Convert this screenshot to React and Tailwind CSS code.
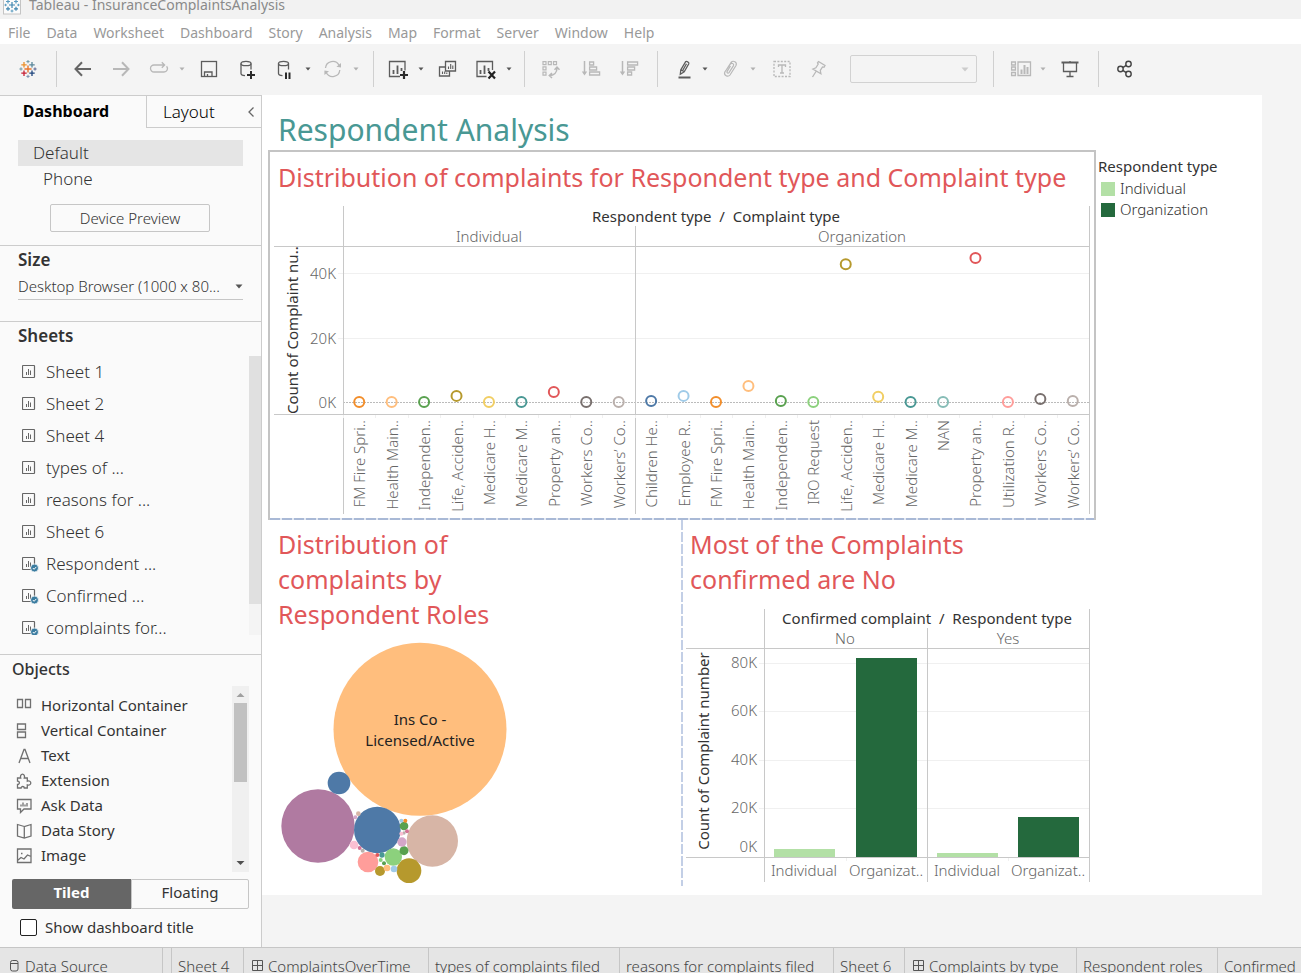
import React from "react";

/* ---------- toolbar glyphs ---------- */

const DARK = "#5c5c5c";
const DIM = "#b8b8b8";

function Glyph({ children, color = DARK, w = 24, sw = 1.5 }) {
  return (
    <svg width={w} height="24" viewBox={`0 0 ${w} 24`} fill="none" stroke={color} strokeWidth={sw} aria-hidden="true">
      {children}
    </svg>
  );
}

function plus(x, y, r, color, w = 1.3) {
  return <path key={`${x}-${y}`} d={`M${x - r} ${y}h${2 * r}M${x} ${y - r}v${2 * r}`} stroke={color} strokeWidth={w} />;
}

function TableauMark() {
  return (
    <Glyph>
      {plus(12, 12, 3.6, "#e8762d", 1.4)}
      {plus(8, 7.8, 2.7, "#eb912c")}
      {plus(16, 7.8, 2.7, "#59879b")}
      {plus(8, 16.2, 2.7, "#c72035")}
      {plus(16, 16.2, 2.7, "#1f457e")}
      {plus(12, 4.6, 1.6, "#7099a6", 1)}
      {plus(12, 19.4, 1.6, "#7b8fae", 1)}
      {plus(5, 12, 1.6, "#7099a6", 1)}
      {plus(19, 12, 1.6, "#5b6591", 1)}
    </Glyph>
  );
}

function AppMark() {
  return (
    <svg width="18" height="18" viewBox="0 0 18 18" aria-hidden="true">
      <rect x="0.5" y="0.5" width="17" height="16.5" fill="#fbfbfb" stroke="#c4c4c4" />
      <g>
        {plus(9, 8, 3, "#3f86b0", 1.2)}
        {plus(5, 4.5, 2, "#5b9cc0", 1.2)}
        {plus(13, 4.5, 2, "#5b9cc0", 1.2)}
        {plus(5, 11.8, 2, "#3f86b0", 1.2)}
        {plus(13, 11.8, 2, "#3f86b0", 1.2)}
        {plus(9, 14, 1.4, "#5b9cc0", 1)}
        {plus(2.6, 8, 1.2, "#5b9cc0", 1)}
        {plus(15.4, 8, 1.2, "#5b9cc0", 1)}
      </g>
    </svg>
  );
}

const icons = {
  back: (
    <Glyph color="#666666" sw={2}>
      <path d="M4.5 12H20M11 5.2L4.5 12l6.5 6.8" />
    </Glyph>
  ),
  forward: (
    <Glyph color={DIM} sw={2}>
      <path d="M4 12h15M13 5.2L19.5 12 13 18.8" />
    </Glyph>
  ),
  redo: (
    <Glyph color={DIM} sw={1.3}>
      <path d="M11 8H7a3.5 3.5 0 0 0 0 7h10a3.5 3.5 0 0 0 2.6-5.8M9 8h8.5M14.8 5.2L17.6 8l-2.8 2.8" />
    </Glyph>
  ),
  save: (
    <Glyph sw={1.3}>
      <rect x="4.5" y="4.5" width="15" height="15" />
      <path d="M7.5 19.5v-4.5h7.5v4.5M10.5 19v-2" />
    </Glyph>
  ),
  addData: (
    <Glyph sw={1.3}>
      <ellipse cx="11" cy="6.5" rx="5" ry="2.2" />
      <path d="M6 6.5v10c0 1.2 1.8 2 4 2.2M16 6.5v6" />
      <path d="M16 14v8M12 18h8" stroke="#2b2b2b" strokeWidth="2" />
    </Glyph>
  ),
  pauseData: (
    <Glyph sw={1.3}>
      <ellipse cx="10.5" cy="6.5" rx="5" ry="2.2" />
      <path d="M5.5 6.5v10c0 1.2 1.8 2 4 2.2M15.5 6.5v6" />
      <path d="M13 15.5v6.5M16.5 15.5v6.5" stroke="#2b2b2b" strokeWidth="2" />
    </Glyph>
  ),
  refresh: (
    <Glyph color={DIM} sw={1.3}>
      <path d="M4.5 11a7.2 7.2 0 0 1 13.5-2.8M18.8 13a7.2 7.2 0 0 1-13.5 2.8" />
      <path d="M20 6v4.6l-4.6-.8zM3.4 18v-4.6l4.6.8z" fill={DIM} stroke="none" />
    </Glyph>
  ),
  newSheet: (
    <Glyph sw={1.3}>
      <path d="M14 19.5H3.5v-15h15.5v9" />
      <path d="M7.5 13v4M11.5 8.5V17M15.5 11v3" strokeWidth="1.8" />
      <path d="M18 14v8M14 18h8" stroke="#2b2b2b" strokeWidth="2.2" />
    </Glyph>
  ),
  duplicate: (
    <Glyph sw={1.3}>
      <path d="M9.5 14V4.5h10v9.5zM9.5 10H3.5v9h10v-5" />
      <path d="M12.5 9.5v2.5M14.7 7v5M16.8 8.5V12M6.5 14.5v2.5M8.7 14.5V17M10.8 15.5V17" strokeWidth="1.1" />
    </Glyph>
  ),
  clear: (
    <Glyph sw={1.3}>
      <path d="M12.5 19.5H3V4.5h15.5v8.5" />
      <path d="M6.5 13v4M10.5 8.5V17M14.5 11v3" strokeWidth="1.8" />
      <path d="M14.5 14.5l6.5 7M21 14.5l-6.5 7" stroke="#222222" strokeWidth="2.2" />
    </Glyph>
  ),
  swap: (
    <Glyph color={DIM} sw={1.2}>
      <path d="M4 4.6h3v3H4zM9.3 4.6h3v3h-3zM14.5 4.6h3v3h-3zM4 9.9h3v3H4zM4 15.1h3v3H4z" />
      <path d="M10.5 18.5c4.5 0 7.5-3 7.5-7.5M15.5 12.8L18 10.2l2.5 2.6M13 16l-2.7 2.6L13 21" strokeWidth="1.5" />
    </Glyph>
  ),
  sortAsc: (
    <Glyph color={DIM} sw={1.3}>
      <path d="M5.5 4v13" strokeWidth="1.5" />
      <path d="M2.8 14.5h5.4L5.5 18.5z" fill={DIM} stroke="none" />
      <path d="M10.6 5h4v3h-4zM10.6 10h7v3h-7zM10.6 15h10v3h-10z" />
    </Glyph>
  ),
  sortDesc: (
    <Glyph color={DIM} sw={1.3}>
      <path d="M5.5 4v13" strokeWidth="1.5" />
      <path d="M2.8 14.5h5.4L5.5 18.5z" fill={DIM} stroke="none" />
      <path d="M10.6 5h10v3h-10zM10.6 10h7v3h-7zM10.6 15h4v3h-4z" />
    </Glyph>
  ),
  highlight: (
    <Glyph sw={1.3}>
      <path d="M8.8 12.8L13.5 4.8c1-1 3.8.4 3.3 1.9L12.2 14.8 8.3 17.3zM8.8 12.8l3.4 2M10.8 13.3l3.7-6.5" />
      <path d="M6.5 20.5h12" strokeWidth="2" />
    </Glyph>
  ),
  clip: (
    <Glyph color={DIM} sw={1.2}>
      <path d="M8.5 12.5l4.5-7c2.2-2.6 6.5-.5 5 3L12 18c-2 2.5-6.5.5-5.2-3L12.5 7c1.2-1.5 3.8-.3 3 1.6l-4.5 7c-.8 1-2.4.3-2-1l3.5-5.6" />
    </Glyph>
  ),
  label: (
    <Glyph color={DIM} sw={1.3}>
      <rect x="4" y="4.5" width="16" height="15" strokeDasharray="2 1.4" />
      <path d="M8.5 10V8h7v2M12 8v8M10 16h4" />
    </Glyph>
  ),
  pin: (
    <Glyph color={DIM} sw={1.3}>
      <path d="M12.5 4.5l6.5 4-1 1.8-1.5-.4-2.2 3.6.6 3.3-8-4.8 3-1.2 2.3-3.7-.7-1.2zM10 14.5L6.5 20" />
    </Glyph>
  ),
  cards: (
    <Glyph color={DIM} w={26} sw={1.3}>
      <path d="M3.6 5h3.8v3H3.6zM3.6 10h3.8v3H3.6zM3.6 15.5h3.8v3H3.6zM10 5h12.5v13.5H10z" />
      <path d="M13.5 12.5V17M16.5 8v9M19.5 10v7" strokeWidth="2" />
    </Glyph>
  ),
  present: (
    <Glyph sw={1.3}>
      <path d="M3.5 5.5h17" strokeWidth="2" />
      <path d="M5.5 6v8.5h13V6M12 4v1M12 14.5v5M8.5 19.5h7" />
    </Glyph>
  ),
  share: (
    <Glyph color="#444444" sw={1.4}>
      <circle cx="7.5" cy="12" r="2.7" />
      <circle cx="15.5" cy="7" r="2.7" />
      <circle cx="15.5" cy="17" r="2.7" />
      <path d="M9.8 10.6l3.4-2.2M9.8 13.4l3.4 2.2" />
    </Glyph>
  ),
};

function Tool({ name, label, className = "" }) {
  return (
    <button type="button" aria-label={label} className={`flex shrink-0 items-center justify-center ${className}`}>
      {icons[name]}
    </button>
  );
}

function Caret({ dim, label, className = "" }) {
  return (
    <button type="button" aria-label={label} className={`flex w-[10px] shrink-0 justify-center ${className}`}>
      <svg width="6" height="4" viewBox="0 0 6 4" aria-hidden="true">
        <path d="M0.5 0.5h5L3 3.5z" fill={dim ? "#b0b0b0" : "#555555"} />
      </svg>
    </button>
  );
}

function Sep({ className = "" }) {
  return <span className={`h-9 w-px shrink-0 bg-[#d0d0d0] ${className}`} />;
}

function Toolbar() {
  return (
    <div className="flex h-[51px] shrink-0 items-center bg-[#f4f4f4] pb-px pl-4" role="toolbar" aria-label="Main toolbar">
      <button type="button" aria-label="Start page" className="shrink-0"><TableauMark /></button>
      <Sep className="ml-4 mr-3.5" />
      <Tool name="back" label="Undo" />
      <Tool name="forward" label="Redo" className="ml-3.5" />
      <Tool name="redo" label="Replay" className="ml-3.5" />
      <Caret dim label="Replay options" className="ml-1.5" />
      <Tool name="save" label="Save" className="ml-2.5" />
      <Tool name="addData" label="New data source" className="ml-3.5" />
      <Tool name="pauseData" label="Pause auto updates" className="ml-3.5" />
      <Caret label="Update options" className="ml-1.5" />
      <Tool name="refresh" label="Run update" className="ml-2" />
      <Caret dim label="Run options" className="ml-1.5" />
      <Sep className="ml-3 mr-3" />
      <Tool name="newSheet" label="New worksheet" />
      <Caret label="New sheet options" className="ml-1.5" />
      <Tool name="duplicate" label="Duplicate" className="ml-2.5" />
      <Tool name="clear" label="Clear sheet" className="ml-3.5" />
      <Caret label="Clear options" className="ml-1.5" />
      <Sep className="ml-2.5 mr-3.5" />
      <Tool name="swap" label="Swap rows and columns" />
      <Tool name="sortAsc" label="Sort ascending" className="ml-4" />
      <Tool name="sortDesc" label="Sort descending" className="ml-3.5" />
      <Sep className="ml-4 mr-3.5" />
      <Tool name="highlight" label="Highlight" />
      <Caret label="Highlight options" className="ml-1" />
      <Tool name="clip" label="Group members" className="ml-2" />
      <Caret dim label="Group options" className="ml-1.5" />
      <Tool name="label" label="Show mark labels" className="ml-3" />
      <Tool name="pin" label="Fix axes" className="ml-3" />
      <div className="relative ml-5 w-[127px] shrink-0">
        <select aria-label="Fit" className="block h-7 w-full appearance-none rounded-xs border border-[#d2d2d2] bg-transparent" />
        <svg className="pointer-events-none absolute right-2 top-3" width="8" height="5" viewBox="0 0 8 5" aria-hidden="true">
          <path d="M0.5 0.5h7L4 4.5z" fill="#cccccc" />
        </svg>
      </div>
      <Sep className="ml-4 mr-3.5" />
      <Tool name="cards" label="Show or hide cards" />
      <Caret dim label="Card options" className="ml-1" />
      <Tool name="present" label="Presentation mode" className="ml-2.5" />
      <Sep className="ml-4 mr-3.5" />
      <Tool name="share" label="Share workbook" />
    </div>
  );
}

/* ---------- side pane ---------- */

function SheetIcon({ used }) {
  return (
    <svg width="18" height="16" viewBox="0 0 18 16" fill="none" stroke="#666666" aria-hidden="true">
      <rect x="0.5" y="1.5" width="12" height="12" rx="0.5" strokeWidth="1.2" />
      <path d="M4.5 8v3M6.5 5v6M8.5 6.5V11" />
      {used && (
        <>
          <circle cx="12.5" cy="12" r="4" fill="#3a7ca0" stroke="#fafafa" strokeWidth="0.8" />
          <path d="M10.8 12l1.3 1.3 2.2-2.4" stroke="#ffffff" strokeWidth="1" />
        </>
      )}
    </svg>
  );
}

const sheets = [
  ["Sheet 1"],
  ["Sheet 2"],
  ["Sheet 4"],
  ["types of ..."],
  ["reasons for ..."],
  ["Sheet 6"],
  ["Respondent ...", true],
  ["Confirmed ...", true],
  ["complaints for...", true],
];

const objects = [
  ["Horizontal Container", <path d="M1.5 2.5h5v8h-5zM9.500 2.5h5v8h-5z" />],
  ["Vertical Container", <path d="M1.5 2h8v5.5h-8zM1.5 10h8v5.5h-8z" />],
  ["Text", <path d="M3 16L8 2.5h1L14 16M4.8 11.5h7.4" />],
  ["Extension", <path d="M1.5 8V6h3.2C4 4 5 2.2 6.5 2.2S9 4 8.3 6h3v3.2c2-.8 3.5.3 3.5 1.8s-1.5 2.5-3.5 1.8V16H8.3c0-2-3.2-2-3.2 0H1.5v-3.5c2.2.3 2.8-3.4 0-3.3z" />],
  ["Ask Data", <path d="M1.5 2.5h13.5V12H8L4.5 15.5V12h-3zM5 7.5v2M7 5.5v4M9 7.5v2M11 6v3.5" />],
  ["Data Story", <path d="M8.3 4.5L1.5 2.5V14l6.8 2 6.7-2V2.5zM8.3 4.5V16" />],
  ["Image", <path d="M1.5 2h13.5v13.5h-13.5zM1.5 13.5l3.5-3 3 1.5 3.5-4L15 9.5M5 6.500h1.5" />],
];

function SidePane() {
  return (
    <aside className="flex w-[262px] shrink-0 flex-col border-r border-t border-[#cccccc] bg-[#fafafa] text-[#333333]">
      <div className="flex h-8 shrink-0 text-black">
        <button type="button" className="w-[146px] pb-0.5 pr-3.5 text-base font-bold">Dashboard</button>
        <div className="flex flex-1 items-center justify-between border-b border-l border-[#cccccc] pl-4 pr-1.5">
          <button type="button" className="text-[17px] font-light">Layout</button>
          <button type="button" aria-label="Collapse pane">
            <svg width="8" height="12" viewBox="0 0 8 12" fill="none" stroke="#666666" strokeWidth="1.3" aria-hidden="true">
              <path d="M6.5 1.5L2 6l4.5 4.5" />
            </svg>
          </button>
        </div>
      </div>

      <div className="flex h-[118px] shrink-0 flex-col border-b border-[#cccccc] px-[18px] pt-3 font-light">
        <button type="button" className="h-[26px] w-full bg-[#e5e5e5] pl-[15px] text-left text-[17px] leading-6">Default</button>
        <button type="button" className="h-[26px] w-full pl-[25px] text-left text-[17px] leading-6">Phone</button>
        <button type="button" className="ml-8 mr-[33px] mt-3 h-7 whitespace-nowrap rounded-xs border border-[#c6c6c6] text-[15px]">Device Preview</button>
      </div>

      <div className="h-[76px] shrink-0 border-b border-[#cccccc] px-[18px] pt-0.5">
        <label htmlFor="size" className="block text-[17px] leading-6 font-semibold">Size</label>
        <div className="relative mt-0.5 border-b border-[#c6c6c6]">
          <select id="size" className="block h-[25px] w-full appearance-none bg-transparent text-[15px] font-light">
            <option>Desktop Browser (1000 x 80...</option>
          </select>
          <svg className="pointer-events-none absolute right-0 top-2.5" width="8" height="5" viewBox="0 0 8 5" aria-hidden="true">
            <path d="M0.5 0.5h7L4 4.5z" fill="#555555" />
          </svg>
        </div>
      </div>

      <section className="flex h-[333px] shrink-0 flex-col border-b border-[#cccccc]">
        <h2 className="h-[34px] shrink-0 pl-[18px] pt-0.5 text-[17px] leading-6 font-semibold">Sheets</h2>
        <div className="flex h-[279px]">
          <ul className="flex-1 overflow-hidden pl-[22px]">
            {sheets.map(([name, used]) => (
              <li key={name} className="flex h-8 items-center gap-1.5 text-[17px] font-light">
                <SheetIcon used={used} />
                {name}
              </li>
            ))}
          </ul>
          <div className="w-3 bg-[#f4f4f4]"><div className="h-[248px] bg-[#e0e0e0]" /></div>
        </div>
      </section>

      <section className="flex min-h-0 flex-1 flex-col">
        <h2 className="h-[31px] shrink-0 pl-3 pt-0.5 text-base font-medium">Objects</h2>
        <div className="flex h-[186px] shrink-0 pr-3">
          <ul className="flex-1 overflow-hidden pl-4 pt-[7px]">
            {objects.map(([name, art]) => (
              <li key={name} className="flex h-[25px] items-center gap-2 text-[15px]">
                <svg width="17" height="17" viewBox="0 0 17 17" fill="none" stroke="#707070" strokeWidth="1.3" aria-hidden="true">{art}</svg>
                {name}
              </li>
            ))}
          </ul>
          <div className="flex w-[17px] flex-col items-center justify-between bg-[#f0f0f0]">
            <svg width="17" height="17" viewBox="0 0 17 17" aria-hidden="true"><path d="M4.5 11h8L8.5 7z" fill="#a0a0a0" /></svg>
            <div className="mb-auto h-[79px] w-[13px] bg-[#c1c1c1]" />
            <svg width="17" height="17" viewBox="0 0 17 17" aria-hidden="true"><path d="M4.5 6h8L8.5 10z" fill="#505050" /></svg>
          </div>
        </div>
        <div className="mx-3 mt-[7px] flex h-[30px] shrink-0 text-[15px]">
          <button type="button" className="w-[119px] rounded-l-xs bg-[#666666] pb-1 font-bold text-white">Tiled</button>
          <button type="button" className="flex-1 rounded-r-xs border border-[#c6c6c6] pb-1">Floating</button>
        </div>
        <div className="mt-[7px] flex items-center gap-2 pl-5 text-[15px]">
          <input id="show-title" type="checkbox" className="size-[17px] appearance-none rounded-xs border border-[#222222] bg-white" />
          <label htmlFor="show-title">Show dashboard title</label>
        </div>
      </section>
    </aside>
  );
}

/* ---------- charts ---------- */

const RULE = "#c8c8c8";
const GRID = "#f0f0f0";
const LABEL = "#666666";

const C = {
  orange: "#f28e2b",
  peach: "#ffbe7d",
  green: "#59a14f",
  lime: "#8cd17d",
  olive: "#b6992d",
  yellow: "#f1ce63",
  teal: "#499894",
  mint: "#86bcb6",
  red: "#e15759",
  rose: "#ff9d9a",
  dark: "#79706e",
  grey: "#bab0ac",
  blue: "#4e79a7",
  sky: "#a0cbe8",
};

const complaints = [
  ["FM Fire Spri..", 0, C.orange],
  ["Health Main..", 0, C.peach],
  ["Independen..", 0, C.green],
  ["Life, Acciden..", 1.9, C.olive],
  ["Medicare H..", 0, C.yellow],
  ["Medicare M..", 0, C.teal],
  ["Property an..", 3.1, C.red],
  ["Workers Co..", 0, C.dark],
  ["Workers’ Co..", 0, C.grey],
  ["Children He..", 0.3, C.blue],
  ["Employee R..", 1.9, C.sky],
  ["FM Fire Spri..", 0, C.orange],
  ["Health Main..", 5, C.peach],
  ["Independen..", 0.3, C.green],
  ["IRO Request", 0, C.lime],
  ["Life, Acciden..", 42.8, C.olive],
  ["Medicare H..", 1.6, C.yellow],
  ["Medicare M..", 0, C.teal],
  ["NAN", 0, C.mint],
  ["Property an..", 44.7, C.red],
  ["Utilization R..", 0, C.rose],
  ["Workers Co..", 0.9, C.dark],
  ["Workers’ Co..", 0.3, C.grey],
];

function DotPlot() {
  const left = 73;
  const right = 819;
  const step = (right - left) / complaints.length;
  const zero = 198;
  const y = (k) => zero - k * 3.22;
  const split = Math.round(left + 9 * step);
  return (
    <svg width="824" height="314" viewBox="0 0 824 314" className="block text-[15px]" role="img" aria-label="Complaints by respondent type and complaint type">
      <g fill="none" strokeWidth="1" shapeRendering="crispEdges">
        {[20, 40].map((k) => <path key={k} stroke={GRID} d={`M${left - 5} ${Math.round(y(k))}.5H${right}`} />)}
        <path stroke="#bbbbbb" strokeDasharray="2 1" d={`M${left} ${zero}.5H${right}`} />
        <path stroke={RULE} d={`M4 42.5H${right}M4 210.5H${right}M${left}.5 2V310M${split}.5 22V310M${right}.5 2V310`} />
        {complaints.map((_, i) => (
          <path key={i} stroke={GRID} d={`M${Math.round(left + step * i)}.5 211v3`} />
        ))}
      </g>
      <text x="446" y="18" textAnchor="middle" fill="#333333" xmlSpace="preserve">Respondent type  /  Complaint type</text>
      <g fill={LABEL} fontWeight="300">
        <text x="219" y="38" textAnchor="middle">Individual</text>
        <text x="592" y="38" textAnchor="middle">Organization</text>
        {[0, 20, 40].map((k) => <text key={k} x="66" y={Math.round(y(k)) + 6} textAnchor="end">{k}K</text>)}
      </g>
      <text transform="translate(28 210) rotate(-90)" fill="#333333">Count of Complaint nu..</text>
      {complaints.map(([name, k, color], i) => {
        const x = left + step * (i + 0.5);
        return (
          <g key={i}>
            <circle cx={x} cy={y(k)} r="5" fill="none" stroke={color} strokeWidth="2" />
            <text transform={`translate(${x + 6} 216) rotate(-90)`} textAnchor="end" fill={LABEL} fontWeight="300">{name}</text>
          </g>
        );
      })}
    </svg>
  );
}

const bubbles = [
  [465, 298, 259.5, C.peach],
  [159, 588, 110, "#b07aa1"],
  [222, 459, 34, C.blue],
  [337, 600, 70, C.blue],
  [502, 633, 77, "#d7b5a6"],
  [432, 722, 37, C.olive],
  [385, 681, 26, C.lime],
  [309, 696, 31, C.rose],
  [345, 723, 15, C.olive],
  [366, 714, 10, C.peach],
  [387, 717, 10, C.sky],
  [417, 662, 13.5, C.green],
  [411, 636, 14, "#d4a6c8"],
  [417, 588, 13, C.green],
  [409, 572, 6, C.sky],
  [421, 572, 6, C.orange],
  [426, 604, 6, "#d37295"],
  [417, 609, 5, C.grey],
  [409, 611, 6, "#fabfd2"],
  [267, 645, 13, "#fabfd2"],
  [284, 654, 6, "#d37295"],
  [293, 662, 6, C.grey],
  [280, 551, 7, "#d7b5a6"],
  [271, 562, 6, "#d4a6c8"],
  [351, 675, 8, C.teal],
  [337, 675, 6, C.red],
  [347, 690, 6, C.lime],
  [357, 700, 6, C.green],
];

function BubbleChart() {
  return (
    <svg width="260" height="254" viewBox="0 9 780 762" className="block" role="img" aria-label="Complaints by respondent role">
      {bubbles.map(([x, y, r, color]) => <circle key={`${x}-${y}`} cx={x} cy={y} r={r} fill={color} />)}
      <g fontSize="45" textAnchor="middle" fill="#222222">
        <text x="465" y="285">Ins Co -</text>
        <text x="465" y="348">Licensed/Active</text>
      </g>
    </svg>
  );
}

const bars = [
  ["Individual", 3.3, 91, "#b3e0a6"],
  ["Organizat..", 82, 173, "#24693d"],
  ["Individual", 1.7, 254, "#b3e0a6"],
  ["Organizat..", 16.5, 335, "#24693d"],
];

function BarChart() {
  const base = 253;
  const y = (k) => base - k * 2.43;
  return (
    <svg width="410" height="280" viewBox="0 0 410 280" className="block text-[15px]" role="img" aria-label="Confirmed complaints by respondent type">
      <g fill="none" strokeWidth="1" shapeRendering="crispEdges">
        {[20, 40, 60, 80].map((k) => <path key={k} stroke={GRID} d={`M76 ${Math.round(y(k))}.5H406`} />)}
        <path stroke={GRID} d="M163.5 254v3M325.5 254v3" />
      </g>
      {bars.map(([name, k, x, color]) => (
        <g key={x} textAnchor="middle">
          <rect x={x} y={y(k)} width="61" height={base - y(k)} fill={color} shapeRendering="crispEdges" />
          <text x={x + 30} y="272" fill={LABEL} fontWeight="300">{name}</text>
        </g>
      ))}
      <path fill="none" stroke={RULE} shapeRendering="crispEdges" d="M3 44.5H406M3 253.5H406M81.5 5V278M244.5 24V278M406.5 5V278" />
      <text x="244" y="20" textAnchor="middle" fill="#333333" xmlSpace="preserve">Confirmed complaint  /  Respondent type</text>
      <g fill={LABEL} fontWeight="300">
        <text x="162" y="40" textAnchor="middle">No</text>
        <text x="325" y="40" textAnchor="middle">Yes</text>
        <text x="74" y="248" textAnchor="end">0K</text>
        {[20, 40, 60, 80].map((k) => <text key={k} x="74" y={Math.round(y(k)) + 5} textAnchor="end">{k}K</text>)}
      </g>
      <text transform="translate(26 147) rotate(-90)" textAnchor="middle" fill="#333333">Count of Complaint number</text>
    </svg>
  );
}

function Canvas() {
  return (
    <main className="min-w-0 flex-1 overflow-hidden bg-[#f4f4f4]">
      <div className="h-[800px] w-[1000px] bg-white pl-1.5">
        <h1 className="flex h-[55px] items-center pl-2.5 pt-3.5 text-[30px] text-[#499894]">Respondent Analysis</h1>
        <div className="flex">
          <div className="w-[828px] shrink-0 text-[#e15759]">
            <section className="h-[370px] border-2 border-[#c4c4c4]">
              <h2 className="h-[52px] whitespace-nowrap pl-2 text-[25px] leading-[51px]">Distribution of complaints for Respondent type and Complaint type</h2>
              <DotPlot />
              <div className="h-0.5 bg-[repeating-linear-gradient(to_right,#a9b9d6_0_10px,#e4e9f2_10px_12px)]" />
            </section>
            <div className="flex">
              <section className="w-[413px] pt-[7px]">
                <h2 className="w-60 pl-2.5 text-[25px] leading-[35px]">Distribution of complaints by Respondent Roles</h2>
                <div className="-ml-[3px] mt-px"><BubbleChart /></div>
              </section>
              <div className="h-[366px] w-0.5 bg-[repeating-linear-gradient(to_bottom,#c3cfe6_0_10px,transparent_10px_12px)]" />
              <section className="flex-1 pt-[7px]">
                <h2 className="w-80 pl-[7px] text-[25px] leading-[35px]">Most of the Complaints confirmed are No</h2>
                <div className="mt-[7px]"><BarChart /></div>
              </section>
            </div>
          </div>
          <div className="pl-0.5 pt-1 text-[15px]">
            <h2 className="leading-6 text-[#333333]">Respondent type</h2>
            <ul className="pl-[3px] leading-[21px] font-light text-[#333333]">
              <li className="flex items-center gap-[5px]"><span className="size-3.5 bg-[#b3e0a6]" />Individual</li>
              <li className="flex items-center gap-[5px]"><span className="size-3.5 bg-[#24693d]" />Organization</li>
            </ul>
          </div>
        </div>
      </div>
    </main>
  );
}

/* ---------- sheet tabs ---------- */

function DashIcon() {
  return (
    <svg width="12" height="12" viewBox="0 0 12 12" fill="none" stroke="#555555" aria-hidden="true">
      <path d="M0.5 0.5h10v10h-10zM5.5 0.5V10.5M0.5 5.5H10.5" />
    </svg>
  );
}

function SourceIcon() {
  return (
    <svg width="9" height="12" viewBox="0 0 9 12" fill="none" stroke="#555555" aria-hidden="true">
      <rect x="0.5" y="0.5" width="7.5" height="10.5" rx="2" />
      <path d="M0.5 3.5h7.5" />
    </svg>
  );
}

const tabs = [
  ["Sheet 4", "w-[72px]"],
  ["ComplaintsOverTime", "w-[185px]", true],
  ["types of complaints filed", "w-[191px]"],
  ["reasons for complaints filed", "w-[214px]"],
  ["Sheet 6", "w-[71px]"],
  ["Complaints by type", "w-[172px]", true],
  ["Respondent roles", "w-[141px]"],
  ["Confirmed", "w-[141px]"],
];

function SheetTabs() {
  return (
    <nav className="flex h-[26px] shrink-0 overflow-hidden border-t border-[#c6c6c6] bg-[#e5e5e5] text-[15px] leading-5 font-light text-[#444444]">
      <a href="#source" className="flex h-9 w-[163px] shrink-0 items-center gap-1.5 border-r border-[#c6c6c6] pl-2.5"><SourceIcon />Data Source</a>
      <span className="w-2 shrink-0" />
      {tabs.map(([name, width, dash]) => (
        <a key={name} href="#sheet" className={`flex h-9 shrink-0 items-center gap-1 whitespace-nowrap border-l border-[#c6c6c6] ${dash ? "pl-2" : "pl-1.5"} ${width}`}>
          {dash && <DashIcon />}
          {name}
        </a>
      ))}
    </nav>
  );
}

const menus = ["File", "Data", "Worksheet", "Dashboard", "Story", "Analysis", "Map", "Format", "Server", "Window", "Help"];

export default function App() {
  return (
    <div className="flex h-screen flex-col overflow-hidden bg-[#f4f4f4] font-['Noto_Sans',sans-serif]">
      <header className="flex h-[19px] shrink-0 items-end gap-2 overflow-hidden bg-[#f2f2f2] pb-1 pl-[3px] text-sm leading-5 text-[#8a8a8a]">
        <AppMark />
        Tableau - InsuranceComplaintsAnalysis
      </header>
      <nav className="flex h-[25px] shrink-0 items-center gap-4 bg-white pl-2 pt-0.5 text-sm text-[#999999]">
        {menus.map((m) => <button type="button" key={m}>{m}</button>)}
      </nav>
      <Toolbar />
      <div className="flex min-h-0 flex-1">
        <SidePane />
        <Canvas />
      </div>
      <SheetTabs />
    </div>
  );
}
